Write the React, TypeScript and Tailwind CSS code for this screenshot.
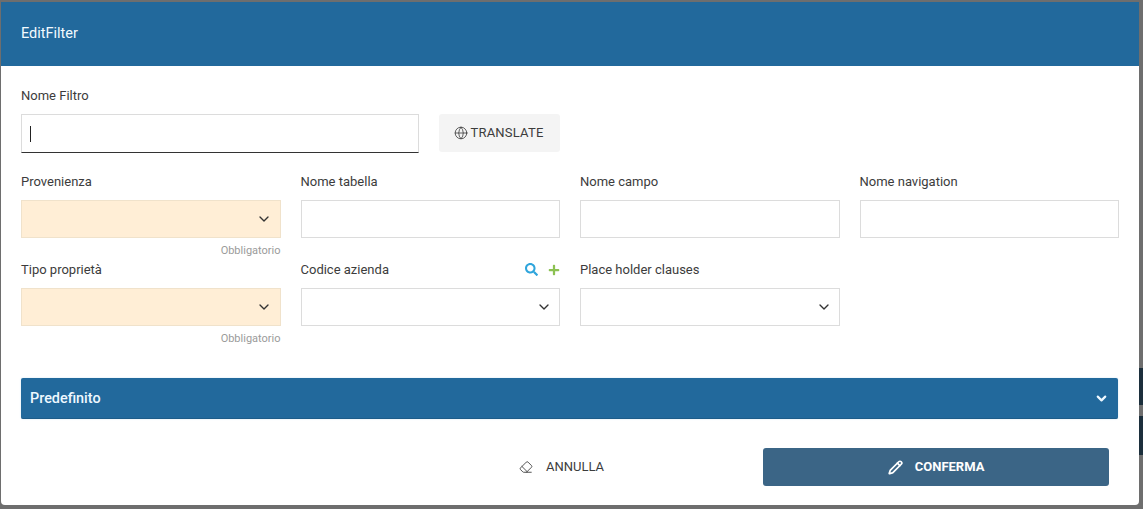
import { ChevronDown, Globe, Pencil, Eraser } from 'lucide-react';
import { FaSearch, FaPlus } from 'react-icons/fa';

const inputClass = 'h-[38px] w-full border border-[#dcdcdc] bg-white';

function Label({ children }: { children: React.ReactNode }) {
  return <div className="h-[19px] text-[13px] leading-[19px] font-normal text-[#3c3c3c]">{children}</div>;
}

function Select({ required }: { required?: boolean }) {
  return (
    <div className={`flex h-[38px] w-full items-center justify-end border ${required ? 'border-[#f0e2cb] bg-[#ffeed6] pr-[8px]' : 'border-[#dcdcdc] bg-white pr-[7px]'}`}>
      <ChevronDown size={16} strokeWidth={2} className="text-[#333]" />
    </div>
  );
}

function Hint() {
  return <div className="mt-[5px] h-[14px] pt-px text-right text-[11px] leading-[14px] text-[#9b9b9b]">Obbligatorio</div>;
}

export default function App() {
  return (
    <div className="relative h-[509px] w-[1143px] overflow-hidden bg-[#6e6e6e] pt-[2px] pr-[4px] pb-[4px] pl-[1px] font-['Roboto',sans-serif]">
      {/* dark bits of the page behind the backdrop */}
      <div className="absolute top-[368px] right-0 h-[37px] w-[4px] bg-[#1c2f3c]" />
      <div className="absolute top-[416px] right-0 h-[39px] w-[4px] bg-[#1c2f3c]" />

      <div className="relative flex h-[503px] flex-col overflow-hidden rounded-b-[4px] bg-white">
        <div className="flex h-[64px] items-center bg-[#22699c] px-[20px] text-[14.5px] text-[#f2fbff]">EditFilter</div>

        <div className="px-[20px] pt-[20px]">
          <Label>Nome Filtro</Label>
          <div className="mt-[9px] flex gap-[20px]">
            <div className="flex h-[39px] w-[398px] items-center border border-[#dcdcdc] border-b-[#333] bg-white pl-[8px]">
              <div className="h-[16px] w-px bg-[#222]" />
            </div>
            <button className="flex h-[38px] w-[121px] items-center justify-center gap-[3px] rounded-[3px] bg-[#f4f4f4] pr-[2px] text-[13px] tracking-[0.2px] text-[#3c3c3c]">
              <Globe size={14} strokeWidth={1.3} className="text-[#333]" />
              TRANSLATE
            </button>
          </div>

          <div className="mt-[19px] grid grid-cols-4 gap-x-[20px]">
            <div>
              <Label>Provenienza</Label>
              <div className="mt-[9px]"><Select required /></div>
              <Hint />
            </div>
            <div>
              <Label>Nome tabella</Label>
              <div className={`mt-[9px] ${inputClass}`} />
            </div>
            <div>
              <Label>Nome campo</Label>
              <div className={`mt-[9px] ${inputClass}`} />
            </div>
            <div>
              <Label>Nome navigation</Label>
              <div className={`mt-[9px] ${inputClass}`} />
            </div>
          </div>

          <div className="mt-[3px] grid grid-cols-4 gap-x-[20px]">
            <div>
              <Label>Tipo proprietà</Label>
              <div className="mt-[9px]"><Select required /></div>
              <Hint />
            </div>
            <div>
              <div className="flex items-center justify-between">
                <Label>Codice azienda</Label>
                <div className="flex items-center gap-[10px]">
                  <FaSearch size={13} className="text-[#2fa5dc]" />
                  <FaPlus size={12} className="text-[#8cc152]" />
                </div>
              </div>
              <div className="mt-[9px]"><Select /></div>
            </div>
            <div>
              <Label>Place holder clauses</Label>
              <div className="mt-[9px]"><Select /></div>
            </div>
          </div>

          <div className="mt-[33px] mr-px flex h-[41px] items-center justify-between rounded-[2px] border-b border-b-[#1d5c89] bg-[#22699c] pr-[9px] pl-[9px] shadow-[0_0_2px_#cfe3f3]">
            <span className="pt-[2px] text-[14.4px] font-medium text-[#eef8ff]">Predefinito</span>
            <ChevronDown size={15} strokeWidth={3.5} className="text-[#eef8ff]" />
          </div>

          <div className="mt-[29px] flex h-[38px] items-center">
            <button className="ml-[498px] flex items-center gap-[13px] text-[13px] text-[#3c3c3c]">
              <Eraser size={14} strokeWidth={1.5} />
              ANNULLA
            </button>
            <button className="ml-[159px] flex h-[38px] w-[346px] items-center justify-center gap-[12px] rounded-[3px] bg-[#3b6586] text-[13px] font-bold text-white">
              <Pencil size={15} strokeWidth={2.75} />
              CONFERMA
            </button>
          </div>
        </div>
      </div>
    </div>
  );
}
